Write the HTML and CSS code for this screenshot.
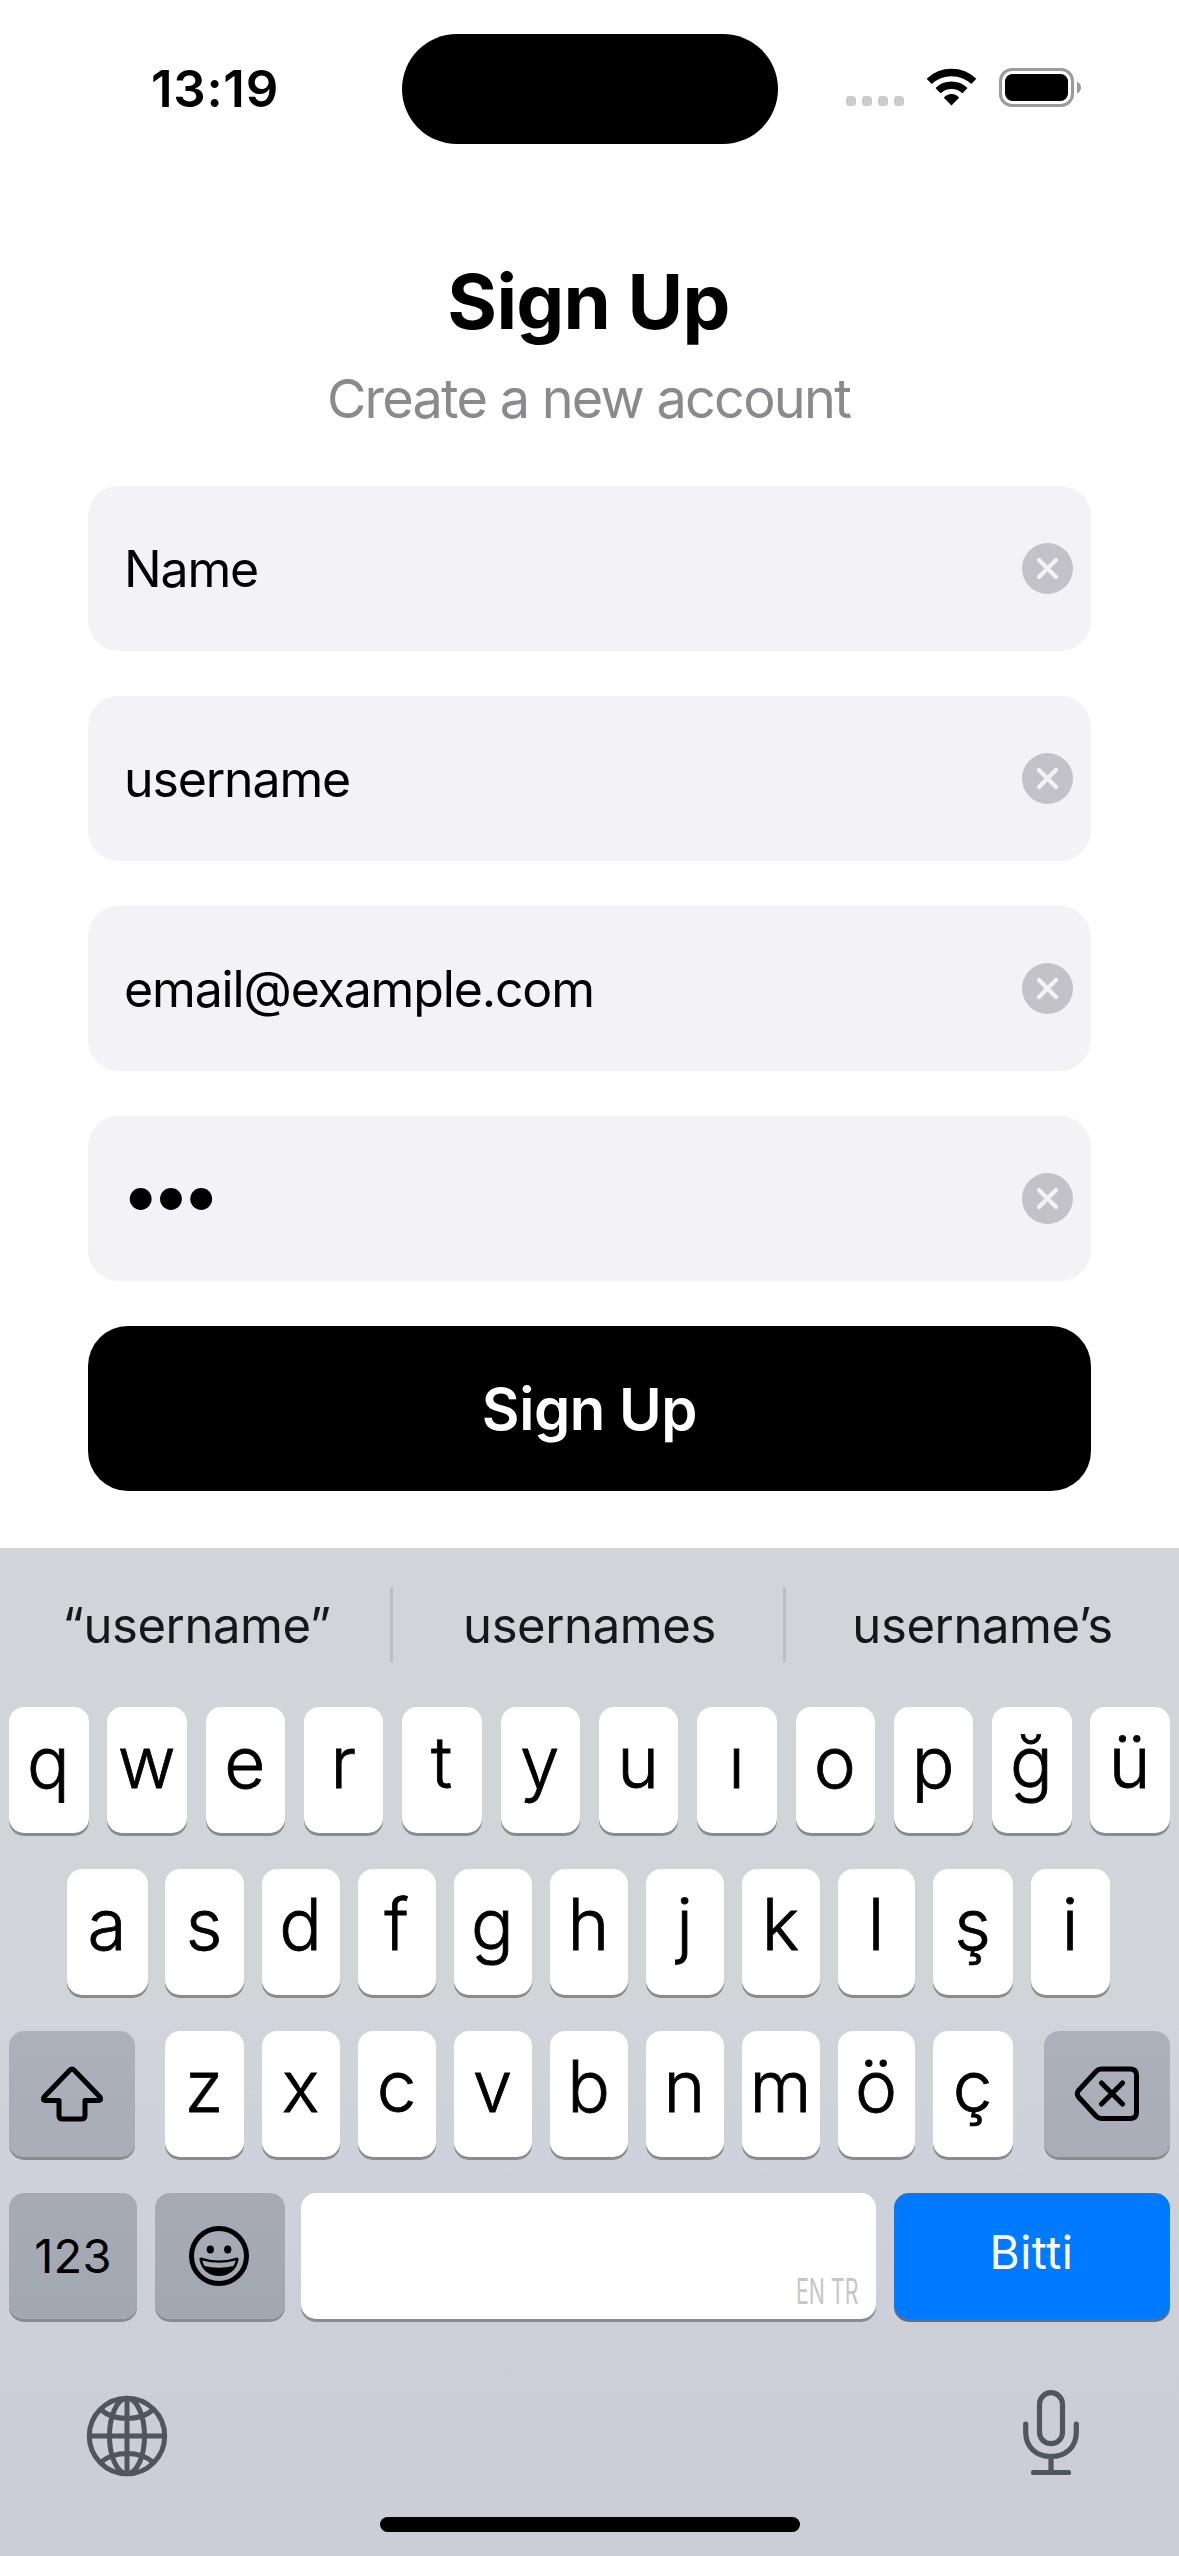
FILE: index.html
```html
<!DOCTYPE html>
<html lang="en">
<head>
<meta charset="utf-8">
<title>Sign Up</title>
<link rel="stylesheet" href="styles.css">
</head>
<body>
<svg class="defs" width="0" height="0" aria-hidden="true">
  <symbol id="clear" viewBox="0 0 51 51">
    <circle cx="25.5" cy="25.5" r="25.5" fill="#c3c2c8"/>
    <path d="M17 17 L34 34 M34 17 L17 34" stroke="#f2f2f7" stroke-width="4.2" stroke-linecap="round"/>
  </symbol>
</svg>
<div class="screen">
  <header class="status">
    <div class="time">13:19</div>
    <div class="island"></div>
    <div class="indicators">
      <div class="signal"><i></i><i></i><i></i><i></i></div>
      <svg class="wifi" width="51" height="38" viewBox="0 0 51 38">
        <g fill="none" stroke="#000" stroke-width="7.4">
          <path d="M3.2 13.4 A32.5 32.5 0 0 1 47.8 13.4"/>
          <path d="M12 22.7 A19.5 19.5 0 0 1 39 22.7"/>
        </g>
        <path d="M25.5 37.4 L17.9 29.7 Q20.8 26.1 25.5 26.1 Q30.2 26.1 33.1 29.7 Z"/>
      </svg>
      <svg class="battery" width="82" height="39" viewBox="0 0 82 39">
        <rect x="1.5" y="1.5" width="72" height="36" rx="11.5" fill="none" stroke="#9b9b9b" stroke-width="3"/>
        <rect x="6" y="6" width="63" height="27" rx="7.5"/>
        <path d="M78 13.5 Q82 15.5 82 19.5 Q82 23.5 78 25.5 Z" fill="#9b9b9b"/>
      </svg>
    </div>
  </header>
  <main class="form">
    <h1 class="title">Sign Up</h1>
    <p class="subtitle">Create a new account</p>
    <div class="field"><span class="value">Name</span><svg class="clear"><use href="#clear"/></svg></div>
    <div class="field"><span class="value">username</span><svg class="clear"><use href="#clear"/></svg></div>
    <div class="field"><span class="value">email@example.com</span><svg class="clear"><use href="#clear"/></svg></div>
    <div class="field"><span class="value secret">•••</span><svg class="clear"><use href="#clear"/></svg></div>
    <button class="submit"><span>Sign Up</span></button>
  </main>
  <section class="keyboard">
    <div class="suggestions">
      <span>“username”</span><span>usernames</span><span>username’s</span>
    </div>
    <div class="row row1">
      <div class="key">q</div><div class="key">w</div><div class="key">e</div><div class="key">r</div><div class="key">t</div><div class="key">y</div><div class="key">u</div><div class="key">ı</div><div class="key">o</div><div class="key">p</div><div class="key">ğ</div><div class="key">ü</div>
    </div>
    <div class="row row2">
      <div class="key">a</div><div class="key">s</div><div class="key">d</div><div class="key">f</div><div class="key">g</div><div class="key">h</div><div class="key">j</div><div class="key">k</div><div class="key">l</div><div class="key">ş</div><div class="key">i</div>
    </div>
    <div class="row row3">
      <div class="key fn">
        <svg width="64" height="56" viewBox="0 0 64 56"><path d="M32 3 Q33 3 34.2 4.2 L60 31 Q62 34.2 58.5 34.5 L45 34.5 L45 49.5 Q45 53 41.5 53 L22.5 53 Q19 53 19 49.5 L19 34.5 L5.5 34.5 Q2 34.2 4 31 L29.8 4.2 Q31 3 32 3 Z" fill="none" stroke="#000" stroke-width="5" stroke-linejoin="round"/></svg>
      </div>
      <div class="key">z</div><div class="key">x</div><div class="key">c</div><div class="key">v</div><div class="key">b</div><div class="key">n</div><div class="key">m</div><div class="key">ö</div><div class="key">ç</div>
      <div class="key fn">
        <svg width="66" height="56" viewBox="0 0 66 56"><path d="M27 3 L56 3 Q62.5 3 62.5 9 L62.5 46.5 Q62.5 52.5 56 52.5 L27 52.5 Q24.5 52.5 22 50 L4.5 31 Q2 27.7 4.5 24.5 L22 5.5 Q24.5 3 27 3 Z M27.5 17 L48.5 38 M48.5 17 L27.5 38" fill="none" stroke="#000" stroke-width="5" stroke-linecap="round" stroke-linejoin="round"/></svg>
      </div>
    </div>
    <div class="row row4">
      <div class="key fn digits">123</div>
      <div class="key fn emoji">
        <svg width="60" height="60" viewBox="0 0 60 60"><circle cx="30" cy="30" r="27.5" fill="none" stroke="#000" stroke-width="5"/><ellipse cx="21.3" cy="23.5" rx="3.6" ry="4"/><ellipse cx="38.7" cy="23.5" rx="3.6" ry="4"/><path d="M12 31.5 Q30 37.5 48 31.5 Q50 31.3 49.5 34 C47.5 44 40 50 30 50 S12.5 44 10.5 34 Q10 31.3 12 31.5 Z"/><path d="M13.3 34.5 Q30 39 46.7 34.5 Q46 37.5 44.5 39.9 Q30 43.5 15.5 39.9 Q14 37.5 13.3 34.5 Z" fill="#a5a9b3"/></svg>
      </div>
      <div class="key space"><span>EN TR</span></div>
      <div class="key done">Bitti</div>
    </div>
    <div class="dock">
      <svg class="globe" width="82" height="82" viewBox="0 0 82 82"><g fill="none" stroke="#50555e" stroke-width="5"><circle cx="41" cy="41" r="37.7"/><ellipse cx="41" cy="41" rx="17.5" ry="37.7"/><path d="M41 3 V79 M3 41 H79 M14.5 14.5 Q25 23.5 41 23.5 T67.5 14.5 M14.5 67.5 Q25 58.5 41 58.5 T67.5 67.5"/></g></svg>
      <svg width="56" height="86" viewBox="0 0 56 86"><g fill="none" stroke="#50555e" stroke-width="5.2" stroke-linecap="round"><rect x="16.5" y="2.7" width="23" height="51" rx="11.5"/><path d="M2.7 34 V42 C2.7 57 13 66.5 28 66.5 S53.3 57 53.3 42 V34 M28 66.5 V82 M10.5 82.5 H45.5"/></g></svg>
    </div>
    <div class="home"></div>
  </section>
</div>
</body>
</html>
```
FILE: styles.css
```css
* { box-sizing: border-box; }
body { margin: 0; background: #fff; font-family: Inter, "Liberation Sans", sans-serif; color: #000; }
.defs { display: block; }
svg { display: block; flex: none; }
.screen { width: 1179px; height: 2556px; display: flex; flex-direction: column; overflow: hidden; }

.status { height: 178px; padding-top: 34px; display: grid; grid-template-columns: 402px 376px 1fr; }
.time { height: 110px; line-height: 109px; padding-left: 151px; font-size: 51px; font-weight: 600; letter-spacing: 0.7px; }
.island { height: 110px; border-radius: 55px; background: #000; }
.indicators { display: flex; align-items: flex-start; padding: 34px 0 0 68px; }
.signal { display: flex; gap: 6px; padding-top: 28px; }
.signal i { width: 10px; height: 10px; border-radius: 3.5px; background: #cbcbcb; }
.wifi { margin-left: 22px; }
.battery { margin-left: 22px; }

.form { height: 1370px; padding: 0 88px; display: flex; flex-direction: column; gap: 45px; }
.title { margin: 76px 0 -45px; padding-right: 2px; height: 94px; line-height: 94px; text-align: center; font-size: 76px; font-weight: 700; letter-spacing: -0.7px; }
.subtitle { margin: 18px 0 9px; padding-right: 2px; height: 66px; line-height: 66px; text-align: center; font-size: 54px; letter-spacing: -1.75px; color: #8a8a8e; }
.field { flex: none; height: 165px; border-radius: 31px; background: #f2f2f7; padding: 0 18px 0 36px; display: flex; align-items: center; justify-content: space-between; }
.value { font-size: 50px; line-height: 60px; letter-spacing: -1.15px; }
.value.secret { font-size: 70px; letter-spacing: -9.1px; margin: -9px 0 0 -3px; }
.clear { width: 51px; height: 51px; }
.submit { flex: none; height: 165px; border: 0; border-radius: 40px; background: #000; color: #fff; font: 600 58px/70px Inter, "Liberation Sans", sans-serif; letter-spacing: -0.4px; }

.keyboard { height: 1008px; background: linear-gradient(#d1d4d9 0, #d1d4d9 45%, #cfd2da 58%, #cbced7 86%, #cbced7); }
.suggestions { height: 159px; padding-top: 39px; display: grid; grid-template-columns: 393px 393px 393px; }
.suggestions span { height: 75px; line-height: 77px; padding-left: 3px; text-align: center; font-size: 49px; letter-spacing: -0.4px; color: #16171a; border-right: 3px solid #bbbfc5; }
.suggestions span:last-child { border: 0; padding: 0; }
.row { display: grid; height: 126px; margin-bottom: 36px; }
.key { display: flex; align-items: center; justify-content: center; height: 126px; border-radius: 15px; background: #fff; box-shadow: 0 3px 0 #898b8f; font-size: 71px; font-weight: 300; -webkit-text-stroke: 0.8px; line-height: 80px; padding: 0 1px 17px 0; }
.row1 { padding: 0 9px; grid-template-columns: repeat(12, 1fr); column-gap: 18.8px; }
.row2 { padding-left: 67px; grid-template-columns: 79px 79px repeat(6, 78px) 77px 80px 79px; column-gap: 18px; }
.row2 .key:first-child { margin-right: -1px; }
.row2 { grid-template-columns: 80px 79px repeat(6, 78px) 77px 80px 79px; }
.row3 { padding-left: 9px; grid-template-columns: 138px 79px repeat(6, 78px) 77px 93px 126px; column-gap: 18px; }
.row3 .key:first-child { width: 126px; }
.row3 .key:nth-child(10) { width: 80px; }
.row4 { padding-left: 9px; grid-template-columns: 128px 130px 573px 276px; column-gap: 18px; }
.row4 .key { -webkit-text-stroke: 0; }
.row4 .key:nth-child(3) { margin-left: -2px; }
.key.fn { background: linear-gradient(#abb0ba, #a8adb8); padding: 0; }
.row4 .key.fn { background: linear-gradient(#a7aab4, #a1a8b2); }
.key.emoji { padding-right: 2px; }
.key.digits { font-size: 47px; font-weight: 400; letter-spacing: 0.3px; }
.key.space { justify-content: flex-end; align-items: flex-end; padding: 0 18px 10px 0; }
.space span { font-size: 35px; line-height: 36px; font-weight: 400; color: #c6c6c7; transform: scaleX(0.61); transform-origin: right; }
.key.done { background: #007aff; color: #fff; font-size: 46px; font-weight: 400; letter-spacing: 0.5px; padding-bottom: 8px; box-shadow: 0 3px 0 #686d75; }
.dock { height: 162px; padding: 35px 100px 0 86px; display: flex; align-items: flex-start; justify-content: space-between; }
.globe { margin-top: 5px; }
.home { width: 420px; height: 15px; border-radius: 8px; background: #000; margin: 0 auto; }
```
